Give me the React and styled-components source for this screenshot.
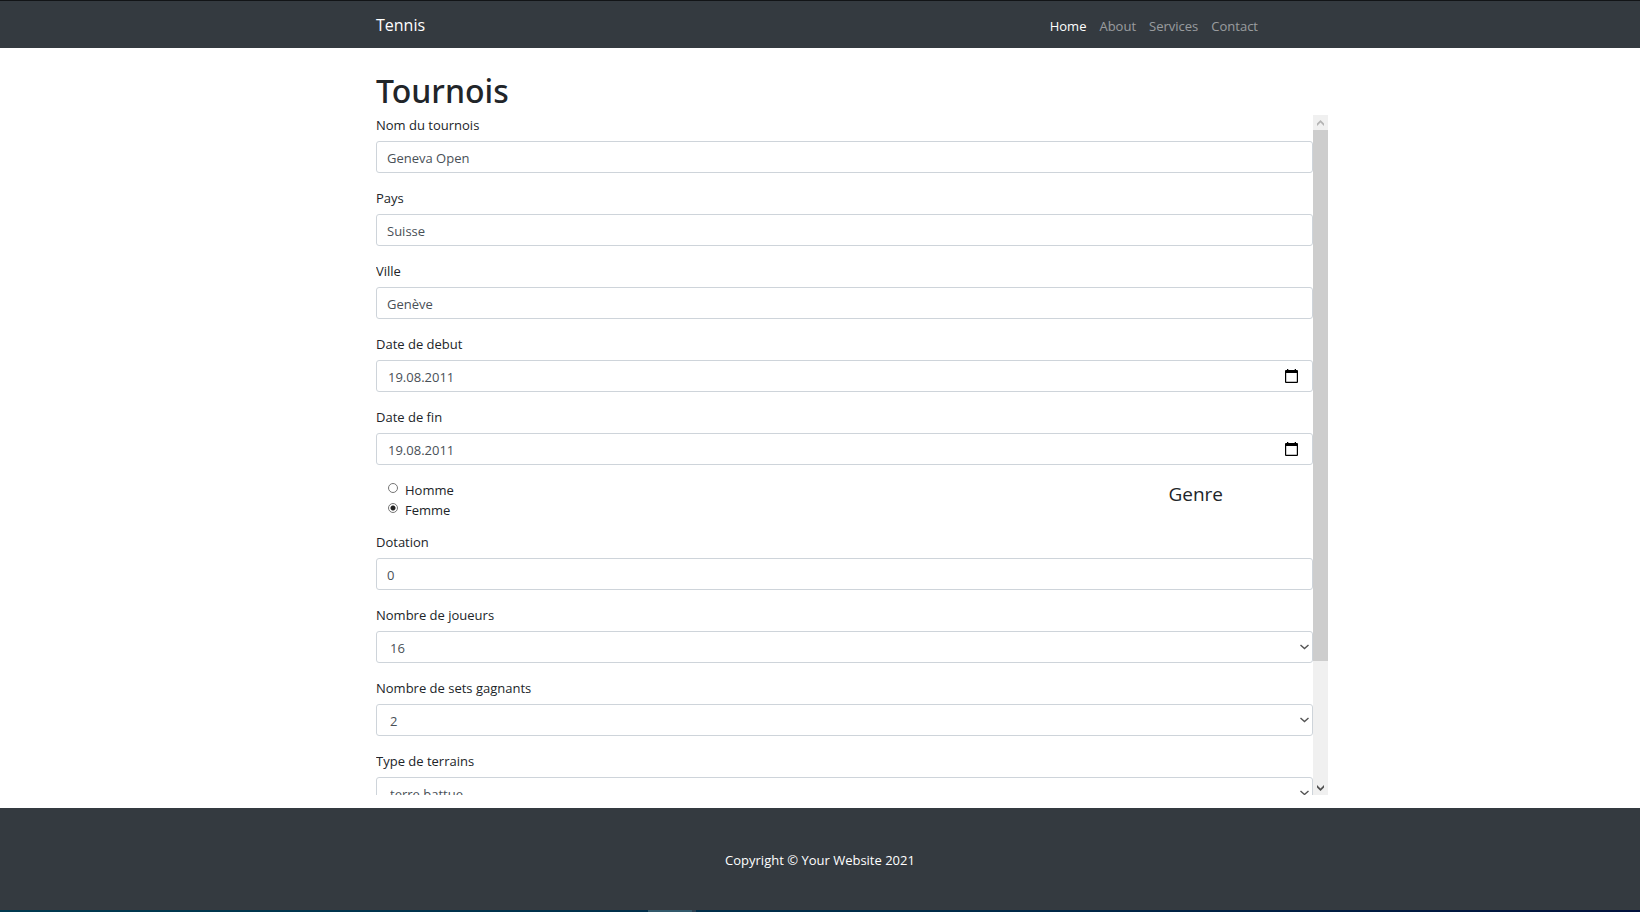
import React, { useRef, useState } from "react";
import styled, { createGlobalStyle } from "styled-components";

const GlobalStyle = createGlobalStyle`
  *, *::before, *::after { box-sizing: border-box; }
  body {
    margin: 0;
    background: #fff;
    color: #212529;
    font-family: "Segoe UI", "Open Sans", "Noto Sans", sans-serif;
    font-size: 13px;
    line-height: 20px;
  }
  button, input, select { font: inherit; }
`;

const Page = styled.div`
  display: flex;
  flex-direction: column;
  min-height: 100vh;
`;

const Container = styled.div`
  width: 100%;
  max-width: 888px;
  margin: 0 auto;
`;

const NavBar = styled.nav`
  background: #343a40;
  border-top: 1px solid #121417;
`;

const NavInner = styled(Container)`
  display: flex;
  align-items: center;
  justify-content: space-between;
  height: 47px;
  padding-top: 2px;
`;

const Brand = styled.a`
  color: #fff;
  font-size: 16px;
  line-height: 24px;
  padding-bottom: 2px;
  text-decoration: none;
`;

const NavList = styled.ul`
  display: flex;
  gap: 1px;
  margin: 0;
  padding: 0;
  list-style: none;
`;

const NavLink = styled.a`
  display: block;
  padding: 7px 6px;
  color: ${(p) => (p.$active ? "#fff" : "rgba(255, 255, 255, 0.5)")};
  text-decoration: none;
`;

const Main = styled(Container)`
  flex: 1;
  padding: 22px 0 13px;
`;

const Title = styled.h1`
  margin: 0 0 4px;
  font-family: "Segoe UI", "Noto Sans", sans-serif;
  font-size: 32px;
  line-height: 41px;
  font-weight: 500;
`;

const ScrollArea = styled.div`
  display: flex;
  height: 680px;
  margin-right: -64px;
`;

const Form = styled.form`
  flex: 1;
  min-width: 0;
  overflow-y: auto;
  scrollbar-width: none;
`;

const Rail = styled.div`
  display: flex;
  flex-direction: column;
  width: 15px;
  background: #f0f0f0;
`;

const RailButton = styled.button`
  display: flex;
  align-items: center;
  justify-content: center;
  height: 15px;
  padding: 0;
  border: 0;
  background: transparent;
  color: ${(p) => (p.$dim ? "#b4b4b4" : "#505050")};
`;

const Track = styled.div`
  flex: 1;
`;

const Thumb = styled.div`
  height: 531px;
  background: #cdcdcd;
`;

const Group = styled.div`
  margin-bottom: 15px;
`;

const Label = styled.label`
  display: block;
  margin-bottom: 6px;
`;

const Control = styled.div`
  display: grid;
  align-items: center;
  > * { grid-area: 1 / 1; }
`;

const Input = styled.input`
  width: 100%;
  height: 32px;
  padding: 1px 10px 0;
  border: 1px solid #ced4da;
  border-radius: 3px;
  background: #fff;
  color: #495057;
  outline: 0;
`;

const DateInput = styled(Input)`
  padding-left: 11px;
`;

const Select = styled.select`
  width: 100%;
  height: 32px;
  padding: 1px 13px 0;
  border: 1px solid #ced4da;
  border-radius: 3px;
  background: #fff;
  color: #495057;
  appearance: none;
`;

const SelectArrow = styled.span`
  display: flex;
  justify-self: end;
  margin-right: 4px;
  color: #555;
  pointer-events: none;
`;

const DateButton = styled.button`
  display: flex;
  justify-self: end;
  margin-right: 15px;
  padding: 0;
  border: 0;
  background: transparent;
  color: #000;
`;

const GenderSet = styled.fieldset`
  display: flex;
  justify-content: space-between;
  margin: 0 0 12px;
  padding: 0 90px 0 12px;
  border: 0;
`;

const Choice = styled.label`
  display: flex;
  align-items: center;
  gap: 7px;
`;

const Radio = styled.input`
  width: 10px;
  height: 10px;
  margin: 0 0 4px;
  border: 1px solid #767676;
  border-radius: 50%;
  background: #fff;
  appearance: none;
  &:checked {
    background: radial-gradient(circle, #222 2px, #fff 3px);
  }
`;

const GenderTitle = styled.span`
  font-size: 19px;
  line-height: 28px;
`;

const Footer = styled.footer`
  display: flex;
  align-items: center;
  justify-content: center;
  height: 102px;
  padding-top: 2px;
  background: #343a40;
  color: #fff;
`;

const BottomEdge = styled.div`
  height: 2px;
  padding-left: 648px;
  background: linear-gradient(90deg, #003a50, #002a48 60%, #00103c);
`;

const EdgeTab = styled.div`
  width: 48px;
  height: 2px;
  background: linear-gradient(90deg, #335a6c 44px, #2a3f50 44px);
`;

const Chevron = () => (
  <svg width="9" height="6" viewBox="0 0 9 6" fill="none" stroke="currentColor" strokeWidth="1.4" aria-hidden="true">
    <path d="M.5 1 4.5 4.5 8.5 1" />
  </svg>
);

const ArrowTip = ({ up }) => (
  <svg width="7" height="6" viewBox="0 0 7 6" fill="currentColor" aria-hidden="true">
    <path d={up ? "M3.5 0 7 3.5V6L3.5 2.5 0 6V3.5Z" : "M3.5 6 7 2.5V0L3.5 3.5 0 0V2.5Z"} />
  </svg>
);

const Calendar = () => (
  <svg width="13" height="14" viewBox="0 0 13 14" aria-hidden="true">
    <path fill="currentColor" fillRule="evenodd" d="M2 0h1.3v1h6.4V0H11v1h1q1 0 1 1v11q0 1-1 1H1q-1 0-1-1V2q0-1 1-1h1ZM1.2 4v8.8h10.6V4Z" />
  </svg>
);

function TextField({ id, label, ...rest }) {
  return (
    <Group>
      <Label htmlFor={id}>{label}</Label>
      <Control>
        <Input id={id} type="text" {...rest} />
      </Control>
    </Group>
  );
}

function DateField({ id, label, value }) {
  return (
    <Group>
      <Label htmlFor={id}>{label}</Label>
      <Control>
        <DateInput id={id} type="text" inputMode="numeric" defaultValue={value} />
        <DateButton type="button" aria-label="Calendrier">
          <Calendar />
        </DateButton>
      </Control>
    </Group>
  );
}

function SelectField({ id, label, options }) {
  return (
    <Group>
      <Label htmlFor={id}>{label}</Label>
      <Control>
        <Select id={id}>
          {options.map((o) => (
            <option key={o}>{o}</option>
          ))}
        </Select>
        <SelectArrow>
          <Chevron />
        </SelectArrow>
      </Control>
    </Group>
  );
}

export default function App() {
  const form = useRef(null);
  const [progress, setProgress] = useState(0);

  const onScroll = (e) => {
    const { scrollTop, scrollHeight, clientHeight } = e.currentTarget;
    setProgress(scrollTop / Math.max(1, scrollHeight - clientHeight));
  };
  const scrollBy = (top) => form.current.scrollBy({ top });

  return (
    <Page>
      <GlobalStyle />
      <NavBar>
        <NavInner>
          <Brand href="#">Tennis</Brand>
          <NavList>
            <li><NavLink href="#" $active>Home</NavLink></li>
            <li><NavLink href="#">About</NavLink></li>
            <li><NavLink href="#">Services</NavLink></li>
            <li><NavLink href="#">Contact</NavLink></li>
          </NavList>
        </NavInner>
      </NavBar>
      <Main as="main">
        <Title>Tournois</Title>
        <ScrollArea>
          <Form ref={form} onScroll={onScroll}>
            <TextField id="nom" label="Nom du tournois" defaultValue="Geneva Open" />
            <TextField id="pays" label="Pays" defaultValue="Suisse" />
            <TextField id="ville" label="Ville" defaultValue="Genève" />
            <DateField id="debut" label="Date de debut" value="19.08.2011" />
            <DateField id="fin" label="Date de fin" value="19.08.2011" />
            <GenderSet aria-labelledby="genre">
              <div>
                <Choice>
                  <Radio type="radio" name="genre" value="homme" />
                  Homme
                </Choice>
                <Choice>
                  <Radio type="radio" name="genre" value="femme" defaultChecked />
                  Femme
                </Choice>
              </div>
              <GenderTitle id="genre">Genre</GenderTitle>
            </GenderSet>
            <TextField id="dotation" label="Dotation" defaultValue="0" />
            <SelectField id="joueurs" label="Nombre de joueurs" options={["16"]} />
            <SelectField id="sets" label="Nombre de sets gagnants" options={["2"]} />
            <SelectField id="terrains" label="Type de terrains" options={["terre battue"]} />
          </Form>
          <Rail>
            <RailButton type="button" aria-label="Défiler vers le haut" $dim={progress === 0} onClick={() => scrollBy(-40)}>
              <ArrowTip up />
            </RailButton>
            <Track>
              <Thumb style={{ marginTop: `${progress * 119}px` }} />
            </Track>
            <RailButton type="button" aria-label="Défiler vers le bas" onClick={() => scrollBy(40)}>
              <ArrowTip />
            </RailButton>
          </Rail>
        </ScrollArea>
      </Main>
      <Footer>Copyright © Your Website 2021</Footer>
      <BottomEdge>
        <EdgeTab />
      </BottomEdge>
    </Page>
  );
}
